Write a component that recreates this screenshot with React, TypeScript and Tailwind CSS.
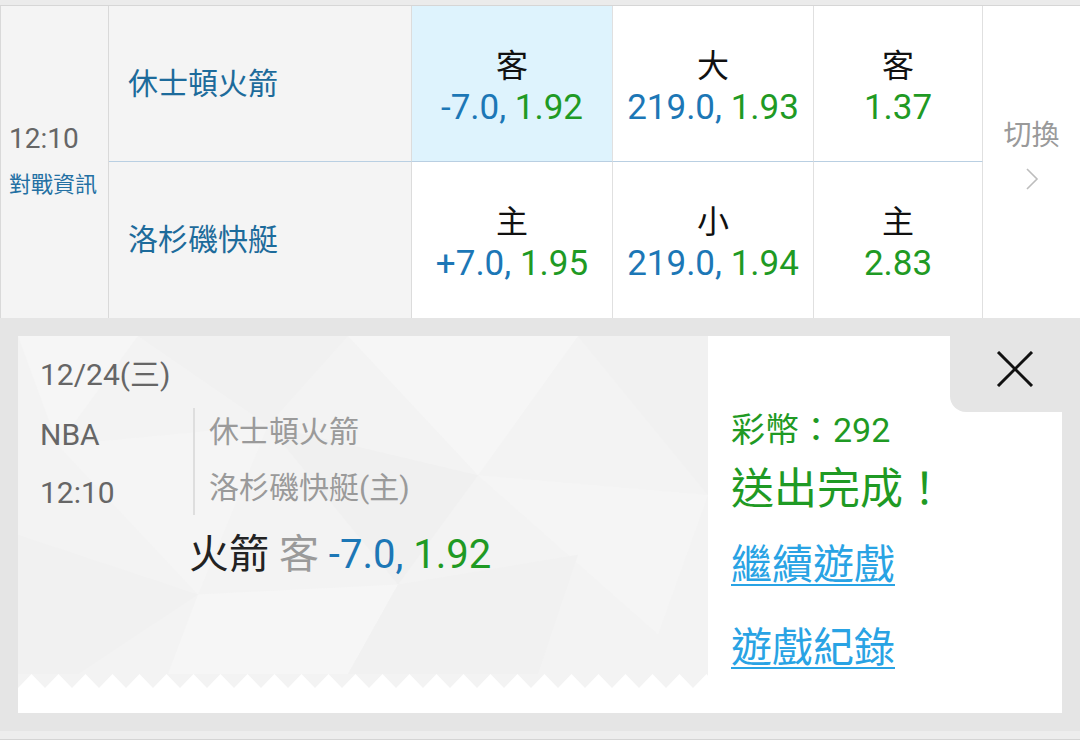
import type { ReactNode } from "react";

const BLUE = "text-[#1c77b6]";
const GREEN = "text-[#1f9a24]";

interface OddsCellProps {
  label: string;
  line?: string;
  odds: string;
  active?: boolean;
  last?: boolean;
}

const OddsCell = ({ label, line, odds, active, last }: OddsCellProps) => {
  return (
    <div
      className={`flex flex-col items-center justify-center border-r border-r-[#e0e0e0] pt-[8px] ${
        active ? "bg-[#def3fd]" : "bg-white"
      } ${last ? "" : "border-b border-b-[#b9cfe2]"}`}
    >
      <span className="text-[32px] leading-[40px] text-[#111]">{label}</span>
      <span className="text-[35px] leading-[44px]">
        {line && <span className={BLUE}>{line}, </span>}
        <span className={GREEN}>{odds}</span>
      </span>
    </div>
  );
};

const TeamCell = ({ name, top }: { name: string; top?: boolean }) => (
  <div
    className={`flex items-center bg-[#f4f4f4] border-r border-r-[#dcdcdc] pl-[19px] ${
      top ? "border-b border-b-[#b9cfe2]" : ""
    }`}
  >
    <span className="text-[30px] leading-[40px] text-[#1d6b9b]">{name}</span>
  </div>
);

const Facets = () => (
  <svg
    className="absolute inset-0 h-full w-full"
    viewBox="0 0 690 340"
    preserveAspectRatio="none"
  >
    <rect width="690" height="340" fill="#f3f3f3" />
    <polygon points="0,0 120,0 40,110" fill="#f6f6f6" />
    <polygon points="120,0 330,0 250,90" fill="#f1f1f1" />
    <polygon points="40,110 250,90 180,260" fill="#f5f5f5" />
    <polygon points="250,90 460,140 380,250" fill="#f0f0f0" />
    <polygon points="330,0 560,0 460,140" fill="#f6f6f6" />
    <polygon points="560,0 690,0 690,160" fill="#f1f1f1" />
    <polygon points="460,140 690,160 640,300" fill="#f5f5f5" />
    <polygon points="0,200 180,260 60,340 0,340" fill="#f1f1f1" />
    <polygon points="180,260 380,250 330,340 150,340" fill="#f6f6f6" />
    <polygon points="380,250 560,220 520,340 330,340" fill="#f1f1f1" />
  </svg>
);

const Zigzag = () => {
  const teeth: ReactNode[] = [];
  for (let x = 0; x < 690; x += 27) {
    teeth.push(
      <polygon key={x} points={`${x},14 ${x + 13.5},0 ${x + 27},14`} fill="#ffffff" />
    );
  }
  return (
    <svg className="relative block" width="690" height="14" viewBox="0 0 690 14">
      {teeth}
    </svg>
  );
};

export default function App() {
  return (
    <div className="flex h-[747px] w-[1080px] flex-col overflow-hidden bg-[#e5e5e5] font-['Roboto','Noto_Sans_CJK_TC',sans-serif]">
      <div className="h-[6px] shrink-0 border-b border-[#d6d6d6] bg-[#ebebeb]" />

      <div className="grid shrink-0 grid-cols-[109px_303px_201px_201px_169px_1fr] grid-rows-[156px_156px] bg-white">
        <div className="row-span-2 flex flex-col justify-center border-l border-r border-[#d9d9d9] bg-[#f4f4f4] pb-[8px] pl-[8px]">
          <span className="mb-[14px] text-[28px] leading-[40px] text-[#666]">12:10</span>
          <span className="text-[22px] leading-[24px] text-[#2370a3]">對戰資訊</span>
        </div>

        <TeamCell name="休士頓火箭" top />
        <OddsCell label="客" line="-7.0" odds="1.92" active />
        <OddsCell label="大" line="219.0" odds="1.93" />
        <OddsCell label="客" odds="1.37" />

        <div className="row-span-2 flex flex-col items-center justify-center gap-[14px] bg-white pb-[14px]">
          <span className="text-[28px] leading-[34px] text-[#9a9a9a]">切換</span>
          <svg width="14" height="24" viewBox="0 0 14 24">
            <polyline points="2,2 12,12 2,22" fill="none" stroke="#bdbdbd" strokeWidth="1.6" />
          </svg>
        </div>

        <TeamCell name="洛杉磯快艇" />
        <OddsCell label="主" line="+7.0" odds="1.95" last />
        <OddsCell label="小" line="219.0" odds="1.94" last />
        <OddsCell label="主" odds="2.83" last />
      </div>

      <div className="px-[18px] pt-[18px]">
        <div className="flex h-[377px]">
          <div className="flex w-[690px] flex-col">
            <div className="relative flex-1">
              <Facets />
              <div className="relative pl-[22px] pt-[19px]">
                <div className="text-[30px] leading-[40px] text-[#666]">12/24(三)</div>
                <div className="mt-[9px] flex">
                  <div className="w-[153px] pt-[2px] text-[30px] leading-[58px] text-[#666]">
                    <div>NBA</div>
                    <div>12:10</div>
                  </div>
                  <div className="mt-[4px] h-[107px] w-[2px] bg-[#dedede]" />
                  <div className="pl-[14px] text-[30px] leading-[56px] text-[#9a9a9a]">
                    <div>休士頓火箭</div>
                    <div>洛杉磯快艇(主)</div>
                  </div>
                </div>
                <div className="ml-[149px] mt-[9px] text-[40px] leading-[48px]">
                  <span className="text-[#222]">火箭 </span>
                  <span className="text-[#9a9a9a]">客 </span>
                  <span className={BLUE}>-7.0, </span>
                  <span className={GREEN}>1.92</span>
                </div>
              </div>
            </div>
            <div className="bg-[#f3f3f3]">
              <Zigzag />
            </div>
            <div className="h-[25px] bg-white" />
          </div>

          <div className="relative flex-1 bg-white pl-[23px] pt-[72px]">
            <div className="absolute right-0 top-0 h-[76px] w-[112px] rounded-bl-[16px] bg-[#e5e5e5] pl-[46px] pt-[15px]">
              <svg width="38" height="36" viewBox="0 0 38 36">
                <line x1="2" y1="1" x2="36" y2="35" stroke="#111" strokeWidth="3" />
                <line x1="36" y1="1" x2="2" y2="35" stroke="#111" strokeWidth="3" />
              </svg>
            </div>
            <div className={`text-[34px] leading-[44px] ${GREEN}`}>彩幣：292</div>
            <div className={`mt-[11px] text-[43px] leading-[52px] ${GREEN}`}>送出完成！</div>
            <a className="mt-[25px] block text-[41px] leading-[50px] text-[#29a3e4] underline decoration-2 underline-offset-[5px]">
              繼續遊戲
            </a>
            <a className="mt-[33px] block text-[41px] leading-[50px] text-[#29a3e4] underline decoration-2 underline-offset-[5px]">
              遊戲紀錄
            </a>
          </div>
        </div>
      </div>

      <div className="mt-[18px] h-[8px] shrink-0 bg-[#ededed]" />
      <div className="h-[1px] shrink-0 bg-[#d4d4d4]" />
      <div className="flex-1 bg-white" />
    </div>
  );
}
